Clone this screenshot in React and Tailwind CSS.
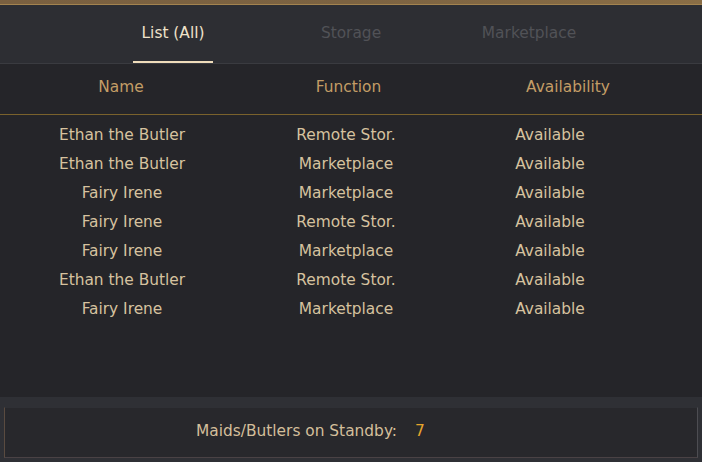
import React from 'react';

const rows = [
  { name: 'Ethan the Butler', fn: 'Remote Stor.', status: 'Available' },
  { name: 'Ethan the Butler', fn: 'Marketplace', status: 'Available' },
  { name: 'Fairy Irene', fn: 'Marketplace', status: 'Available' },
  { name: 'Fairy Irene', fn: 'Remote Stor.', status: 'Available' },
  { name: 'Fairy Irene', fn: 'Marketplace', status: 'Available' },
  { name: 'Ethan the Butler', fn: 'Remote Stor.', status: 'Available' },
  { name: 'Fairy Irene', fn: 'Marketplace', status: 'Available' },
];

const tabs = ['List (All)', 'Storage', 'Marketplace'];

export default function App() {
  return (
    <div
      className="w-[702px] h-[462px] flex flex-col bg-[#252529] text-[15.4px] overflow-hidden"
      style={{ fontFamily: '"DejaVu Sans", sans-serif' }}
    >
      {/* top gold strip */}
      <div className="h-[4px] bg-gradient-to-r from-[#7a6040] via-[#7c6342] to-[#8a6e46]" />
      <div className="h-[1px] bg-[#a3834f]" />

      {/* tabs */}
      <div className="h-[59px] flex justify-center bg-[#2d2e33] border-b border-[#3a3b40]">
        {tabs.map((t, i) => (
          <div key={t} className="w-[178px] flex flex-col items-center">
            <div className={`flex-1 flex items-center pt-[1px] ${i === 0 ? 'text-[#efe2ca]' : 'text-[#515257]'}`}>
              {t}
            </div>
            <div className={`w-[80px] h-[2px] ${i === 0 ? 'bg-[#efdcba]' : 'bg-transparent'}`} />
          </div>
        ))}
      </div>

      {/* header */}
      <div className="h-[51px] grid grid-cols-[242px_213px_226px] items-center text-[#c39d66] border-b border-[#7a622c] pb-[2px]">
        <div className="text-center">Name</div>
        <div className="text-center">Function</div>
        <div className="text-center">Availability</div>
      </div>

      {/* rows */}
      <div className="flex-1 pt-[6px] text-[#d6c29f]">
        {rows.map((r, i) => (
          <div key={i} className="h-[29px] grid grid-cols-[244px_204px_204px] items-center">
            <div className="text-center">{r.name}</div>
            <div className="text-center">{r.fn}</div>
            <div className="text-center">{r.status}</div>
          </div>
        ))}
      </div>

      {/* footer */}
      <div className="h-[65px] bg-[#2f3035] pt-[10px] px-[4px] pb-[4px]">
        <div className="h-full bg-[#28282c] border border-l-[#5a4b40] border-t-[#2f3035] border-r-[#4d4d52] border-b-[#4a4245] flex items-center pl-[191px] pb-[2px]">
          <span className="text-[#d4bf9b]">Maids/Butlers on Standby:</span>
          <span className="ml-[18px] text-[#e6a52c]">7</span>
        </div>
      </div>
    </div>
  );
}
